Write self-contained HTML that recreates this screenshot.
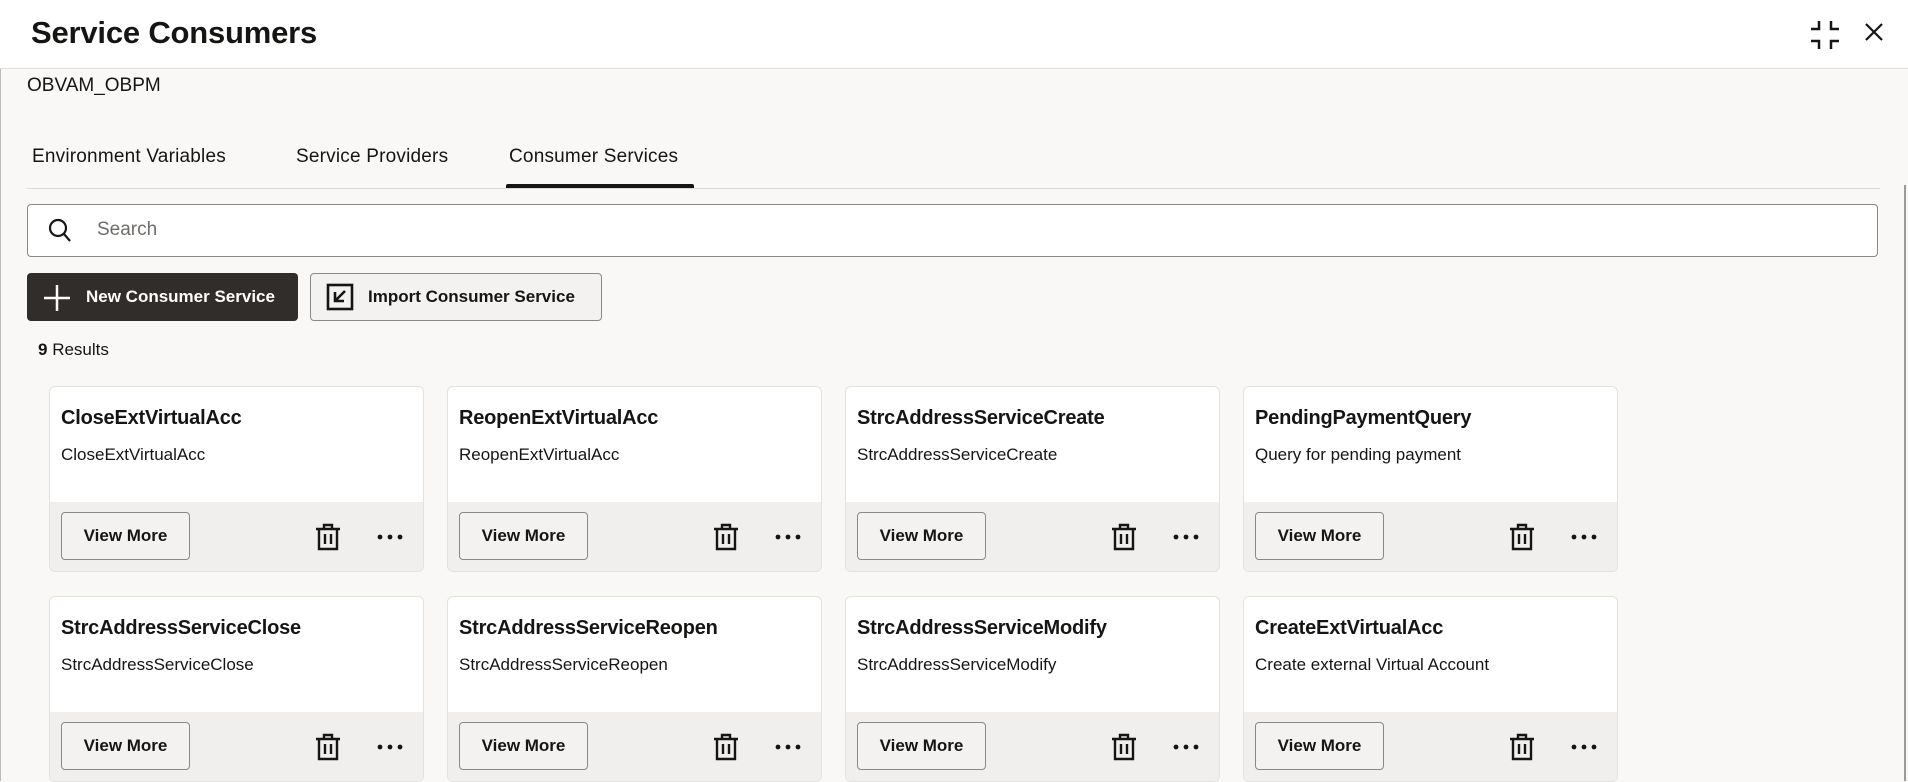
<!DOCTYPE html>
<html><head><meta charset="utf-8"><style>
*{box-sizing:border-box;margin:0;padding:0}
body{width:1908px;height:781px;overflow:hidden;background:#f9f8f6;font-family:"Liberation Sans",sans-serif;color:#161513;position:relative}
.hdr{position:absolute;left:0;top:0;width:1908px;height:69px;background:#fff;border-bottom:1px solid #e0dedb}
.t{position:absolute;left:31px;top:15px;font-size:31px;font-weight:bold;letter-spacing:-0.2px}
.a{position:absolute}
.tab{position:absolute;top:146px;font-size:19px;letter-spacing:0.2px}
.card{position:absolute;width:375px;height:186px;background:#fff;border:1px solid #e4e2df;border-radius:6px;overflow:hidden}
.card h3{position:absolute;left:11px;top:20px;font-size:20px;font-weight:bold;letter-spacing:-0.2px}
.card p{position:absolute;left:11px;top:58px;font-size:17px}
.ft{position:absolute;left:0;top:115px;width:100%;height:71px;background:#f1efed}
.vm{position:absolute;left:11px;top:10px;width:129px;height:48px;border:1px solid #8a8784;border-radius:4px;background:#f4f2f0;font-size:17px;font-weight:bold;text-align:center;line-height:46px}
.tr{position:absolute;left:264px;top:21px}
.dt{position:absolute;left:326px;top:31px}
</style></head><body>
<div class="hdr"><div class="t">Service Consumers</div>
<svg class="a" style="left:1810px;top:20px" width="30" height="30" viewBox="0 0 30 30" fill="none" stroke="#161513" stroke-width="2.5"><path d="M1 9H9V1M21 1V9H29M1 21H9V29M21 29V21H29"/></svg>
<svg class="a" style="left:1864px;top:22px" width="20" height="20" viewBox="0 0 20 20" stroke="#161513" stroke-width="2.2"><path d="M2 2L18 18M18 2L2 18"/></svg>
</div>
<div style="position:absolute;left:0;top:69px;width:1px;height:712px;background:#bbb"></div>
<div style="position:absolute;left:1904px;top:185px;width:2px;height:596px;background:#999"></div>
<div class="a" style="left:27px;top:75px;font-size:19px">OBVAM_OBPM</div>
<div class="tab" style="left:32px">Environment Variables</div>
<div class="tab" style="left:296px">Service Providers</div>
<div class="tab" style="left:509px">Consumer Services</div>
<div class="a" style="left:27px;top:188px;width:1853px;height:1px;background:#dcdad7"></div>
<div class="a" style="left:506px;top:184px;width:188px;height:4px;background:#161513;border-radius:2px 2px 0 0"></div>
<div class="a" style="left:27px;top:204px;width:1851px;height:53px;background:#fff;border:1px solid #8a8784;border-radius:4px"></div>
<svg class="a" style="left:48px;top:218px" width="24" height="26" viewBox="0 0 24 26" fill="none" stroke="#161513" stroke-width="2.2"><circle cx="10" cy="10" r="8"/><path d="M16 16L22 23"/></svg>
<div class="a" style="left:97px;top:219px;font-size:19px;color:#6f6c69">Search</div>
<div class="a" style="left:27px;top:273px;width:271px;height:48px;background:#312d2a;border-radius:4px"></div>
<svg class="a" style="left:43px;top:284px" width="28" height="28" viewBox="0 0 28 28" stroke="#fff" stroke-width="2.5"><path d="M14 1V27M1 14H27"/></svg>
<div class="a" style="left:86px;top:287px;font-size:17px;font-weight:bold;color:#fff">New Consumer Service</div>
<div class="a" style="left:310px;top:273px;width:292px;height:48px;background:#f4f2f0;border:1px solid #8a8784;border-radius:4px"></div>
<svg class="a" style="left:326px;top:283px" width="28" height="28" viewBox="0 0 28 28" fill="none" stroke="#161513" stroke-width="2.6"><rect x="2" y="2" width="24" height="24"/><path d="M19 8L10 17M9 9V18H18"/></svg>
<div class="a" style="left:368px;top:287px;font-size:17px;font-weight:bold">Import Consumer Service</div>
<div class="a" style="left:38px;top:340px;font-size:17px"><b>9</b> Results</div>

<svg width="0" height="0" style="position:absolute"><defs>
<symbol id="tr" viewBox="0 0 28 28"><g fill="none" stroke="#161513" stroke-width="2.4"><path d="M2 6H26M10 6V2H18V6M5 6V26H23V6M11 11V21M17 11V21"/></g></symbol>
<symbol id="dt" viewBox="0 0 30 8"><circle cx="4" cy="4" r="2.4" fill="#161513"/><circle cx="14" cy="4" r="2.4" fill="#161513"/><circle cx="24" cy="4" r="2.4" fill="#161513"/></symbol>
</defs></svg>

<div class="card" style="left:49px;top:386px"><h3>CloseExtVirtualAcc</h3><p>CloseExtVirtualAcc</p><div class="ft"><div class="vm">View More</div><svg class="tr" width="28" height="28"><use href="#tr"/></svg><svg class="dt" width="30" height="8"><use href="#dt"/></svg></div></div>
<div class="card" style="left:447px;top:386px"><h3>ReopenExtVirtualAcc</h3><p>ReopenExtVirtualAcc</p><div class="ft"><div class="vm">View More</div><svg class="tr" width="28" height="28"><use href="#tr"/></svg><svg class="dt" width="30" height="8"><use href="#dt"/></svg></div></div>
<div class="card" style="left:845px;top:386px"><h3>StrcAddressServiceCreate</h3><p>StrcAddressServiceCreate</p><div class="ft"><div class="vm">View More</div><svg class="tr" width="28" height="28"><use href="#tr"/></svg><svg class="dt" width="30" height="8"><use href="#dt"/></svg></div></div>
<div class="card" style="left:1243px;top:386px"><h3>PendingPaymentQuery</h3><p>Query for pending payment</p><div class="ft"><div class="vm">View More</div><svg class="tr" width="28" height="28"><use href="#tr"/></svg><svg class="dt" width="30" height="8"><use href="#dt"/></svg></div></div>
<div class="card" style="left:49px;top:596px"><h3>StrcAddressServiceClose</h3><p>StrcAddressServiceClose</p><div class="ft"><div class="vm">View More</div><svg class="tr" width="28" height="28"><use href="#tr"/></svg><svg class="dt" width="30" height="8"><use href="#dt"/></svg></div></div>
<div class="card" style="left:447px;top:596px"><h3>StrcAddressServiceReopen</h3><p>StrcAddressServiceReopen</p><div class="ft"><div class="vm">View More</div><svg class="tr" width="28" height="28"><use href="#tr"/></svg><svg class="dt" width="30" height="8"><use href="#dt"/></svg></div></div>
<div class="card" style="left:845px;top:596px"><h3>StrcAddressServiceModify</h3><p>StrcAddressServiceModify</p><div class="ft"><div class="vm">View More</div><svg class="tr" width="28" height="28"><use href="#tr"/></svg><svg class="dt" width="30" height="8"><use href="#dt"/></svg></div></div>
<div class="card" style="left:1243px;top:596px"><h3>CreateExtVirtualAcc</h3><p>Create external Virtual Account</p><div class="ft"><div class="vm">View More</div><svg class="tr" width="28" height="28"><use href="#tr"/></svg><svg class="dt" width="30" height="8"><use href="#dt"/></svg></div></div>
</body></html>
